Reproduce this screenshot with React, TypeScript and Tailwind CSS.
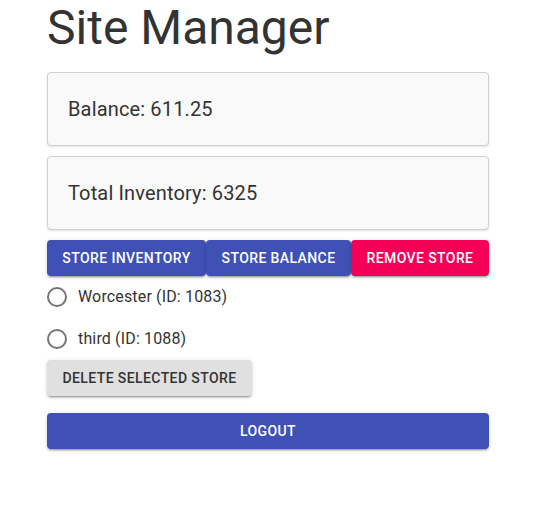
import React from "react";

const btnShadow =
  "shadow-[0_3px_1px_-2px_rgba(0,0,0,0.2),0_2px_2px_0_rgba(0,0,0,0.14),0_1px_5px_0_rgba(0,0,0,0.12)]";

function Radio({ label }: { label: string }) {
  return (
    <label className="flex items-center h-[42px] -ml-[11px] cursor-pointer">
      <span className="w-[42px] h-[42px] flex items-center justify-center">
        <span className="w-[20px] h-[20px] rounded-full border-2 border-[#757575] box-border" />
      </span>
      <span className="text-[16px] leading-[24px] text-[#333] tracking-[0.15px]">{label}</span>
    </label>
  );
}

export default function App() {
  return (
    <div
      className="w-[538px] h-[530px] bg-white pl-[47px]"
      style={{ fontFamily: "Roboto, 'Helvetica Neue', Arial, sans-serif" }}
    >
      <div className="w-[442px] flex flex-col">
        <h1 className="text-[48px] leading-[56px] font-normal text-[#333] m-0">Site Manager</h1>
        <div className="mt-[16px] h-[74px] border border-[#cfcfcf] rounded-[4px] bg-[#f9f9f9] px-[20px] py-[20px] shadow-[0_1px_2px_rgba(0,0,0,0.12)]">
          <p className="text-[20px] leading-[32px] text-[#333] tracking-[0.15px]">Balance: 611.25</p>
        </div>
        <div className="mt-[10px] h-[74px] border border-[#cfcfcf] rounded-[4px] bg-[#f9f9f9] px-[20px] py-[20px] shadow-[0_1px_2px_rgba(0,0,0,0.12)]">
          <p className="text-[20px] leading-[32px] text-[#333] tracking-[0.15px]">Total Inventory: 6325</p>
        </div>
        <div className="mt-[10px] flex">
          <button className={`h-[36px] w-[159px] rounded-[4px] bg-[#3f51b5] text-white text-[14px] font-medium uppercase tracking-[0.4px] ${btnShadow}`}>
            Store Inventory
          </button>
          <button className={`h-[36px] w-[145px] rounded-[4px] bg-[#3f51b5] text-white text-[14px] font-medium uppercase tracking-[0.4px] ${btnShadow}`}>
            Store Balance
          </button>
          <button className={`h-[36px] w-[138px] rounded-[4px] bg-[#f50057] text-white text-[14px] font-medium uppercase tracking-[0.4px] ${btnShadow}`}>
            Remove Store
          </button>
        </div>
        <div className="flex flex-col">
          <Radio label="Worcester (ID: 1083)" />
          <Radio label="third (ID: 1088)" />
        </div>
        <div className="flex">
          <button className={`h-[36px] w-[205px] rounded-[4px] bg-[#e0e0e0] text-[#333] text-[14px] font-medium uppercase tracking-[0.4px] ${btnShadow}`}>
            Delete Selected Store
          </button>
        </div>
        <button className={`mt-[17px] h-[36px] w-full rounded-[4px] bg-[#3f51b5] text-white text-[14px] font-medium uppercase tracking-[0.4px] ${btnShadow}`}>
          Logout
        </button>
      </div>
    </div>
  );
}
